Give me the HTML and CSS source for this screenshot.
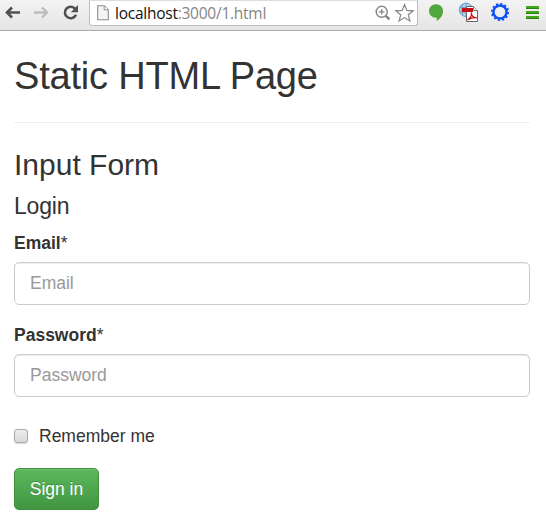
FILE: index.html
```html
<!DOCTYPE html>
<html lang="en">
<head>
<meta charset="utf-8">
<title>Static HTML Page</title>
<link rel="stylesheet" href="styles.css">
</head>
<body>
<header class="toolbar">
  <svg class="nav" width="82" height="30" viewBox="0 0 82 30" fill="none">
    <path d="M20 12.5H7M12 7.5l-5 5 5 5" stroke="#505050" stroke-width="2.6"/>
    <path d="M34 12.5h13M42 7.5l5 5-5 5" stroke="#bdbdbd" stroke-width="2.3"/>
    <path d="M75.200 8.800A5.800 5.800 0 1 0 76 14.800" stroke="#505050" stroke-width="2.500"/>
    <path d="M78 5v7.200h-7.200z" fill="#505050"/>
  </svg>
  <div class="address">
    <svg class="page-icon" width="12" height="16" viewBox="0 0 12 16">
      <path d="M.7.7h6.600l4 4v10h-10.600z" fill="#f5f5f5" stroke="#8d8d8d" stroke-width="1.100"/>
      <path d="M7.200.8v4h4" fill="#fff" stroke="#8d8d8d"/>
    </svg>
    <span class="url">localhost<span class="path">:3000/1.html</span></span>
    <svg class="actions" width="42" height="22" viewBox="0 0 42 22" fill="none" stroke="#858585">
      <circle cx="7.700" cy="8.800" r="5.500" stroke-width="1.400"/>
      <path d="M4.900 8.800h5.600M7.700 6v5.600" stroke-width="1.300"/>
      <path d="M11.800 12.800l3.600 3.500" stroke-width="2.500"/>
      <path d="M30.500 1.600l2.400 5.800 6.300.4-4.900 4 1.600 6.200-5.400-3.400-5.400 3.400 1.600-6.200-4.900-4 6.300-.4z" stroke-width="1.200"/>
    </svg>
  </div>
  <svg class="extensions" width="128" height="30" viewBox="418 0 128 30" fill="none">
    <path d="M436 4.200c4.200 0 7.100 3 7.100 6.900 0 4.300-3.200 8.400-6.400 10v-3.300c-4.700.3-7.700-2.800-7.700-6.700 0-3.900 3-6.900 7-6.900z" fill="#50a83d"/>
    <circle cx="466" cy="9.800" r="6.700" fill="#b9d6ef" stroke="#6497c7"/>
    <path d="M460 7.500h12M460 12h12M466 3v13M463 4q-3 6 0 11" stroke="#6a9acb" stroke-width=".9"/>
    <path d="M466.500 6.500h7l4 4v11h-11z" fill="#fff" stroke="#666"/>
    <path d="M462 8h11v4h-11z" fill="#c51116"/>
    <path d="M473.500 6.500v4h4" fill="#eee" stroke="#666" stroke-width=".8"/>
    <path d="M467.500 20c3-2 4.600-4.500 3.800-7.500.3 3.500 2 5.300 5.500 5.300-3-.4-5.800.2-9.300 2.200z" stroke="#c51116" stroke-width="1.300"/>
    <circle cx="500" cy="12" r="6.600" stroke="#0d50fa" stroke-width="2.500"/>
    <circle cx="500" cy="12" r="8.300" stroke="#0d50fa" stroke-width="1.600" stroke-dasharray="2.173 2.173"/>
    <g fill="#43a51b">
      <rect x="526" y="6" width="13" height="3" rx=".5"/>
      <rect x="526" y="11" width="13" height="3" rx=".5"/>
      <rect x="526" y="16" width="13" height="3" rx=".5"/>
    </g>
    <path d="M526 8.500h13M526 13.500h13M526 18.500h13" stroke="#28820d"/>
  </svg>
</header>
<main>
  <h1>Static HTML Page</h1>
  <h2>Input Form</h2>
  <form>
    <h3>Login</h3>
    <label class="label" for="email">Email<span>*</span></label>
    <input class="field" id="email" type="email" placeholder="Email">
    <label class="label" for="password">Password<span>*</span></label>
    <input class="field" id="password" type="password" placeholder="Password">
    <label class="remember"><input type="checkbox"><span>Remember me</span></label>
    <button type="button">Sign in</button>
  </form>
</main>
</body>
</html>
```
FILE: styles.css
```css
* { box-sizing: border-box; }
body {
  margin: 0;
  background: #fff;
  color: #333;
  font: 17.5px/25px "Liberation Sans", Arial, sans-serif;
  overflow: hidden;
}
.toolbar {
  display: flex;
  height: 31px;
  background: linear-gradient(#f3f3f3, #e5e5e5);
  border-bottom: 1px solid #aaa;
}
.nav { flex: none; }
.address {
  display: flex;
  width: 329px;
  height: 26px;
  margin-left: 7px;
  padding-left: 7px;
  background: #fff;
  border: 1px solid #bdbdbd;
  border-top-color: #ddd;
  border-radius: 0 0 3px 3px;
}
.page-icon { margin-top: 4px; }
.url {
  margin-left: 6px;
  color: #111;
  font: 15.5px/24px "Open Sans", sans-serif;
  letter-spacing: -.25px;
  white-space: nowrap;
}
.path { color: #858585; }
.actions { margin: 2px 1px 0 auto; flex: none; }
.extensions { flex: none; }
main { padding: 23px 16px 0 14px; }
h1, h2, h3 { margin: 0; font-weight: 400; }
h1 {
  height: 69px;
  border-bottom: 1px solid #eee;
  font-size: 38px;
  line-height: 44px;
  letter-spacing: -.2px;
}
h2 { margin-top: 25px; font-size: 30px; line-height: 34px; }
h3 { margin-top: 11px; font-size: 23px; line-height: 26px; letter-spacing: -.2px; }
.label { display: block; margin-top: 12px; font-weight: 700; }
.label span { font-weight: 400; }
.field {
  display: block;
  width: 100%;
  height: 43px;
  margin: 6px 0 18px;
  padding: 0 15px;
  border: 1px solid #ccc;
  border-radius: 5px;
  box-shadow: inset 0 1px 1px rgba(0, 0, 0, .075);
  font: inherit;
}
.field::placeholder { color: #999; opacity: 1; }
.remember { display: flex; align-items: flex-start; margin-top: 27px; }
.remember input {
  appearance: none;
  width: 14px;
  height: 14px;
  margin: 5px 11px 0 0;
  border: 1px solid #aaa;
  border-radius: 3px;
  background: linear-gradient(#eee, #d9d9d9);
  box-shadow: 0 1px 1px #ddd;
}
button {
  display: block;
  width: 85px;
  height: 42px;
  margin-top: 19px;
  padding: 0;
  border: 1px solid #3e8f3e;
  border-radius: 5px;
  background: linear-gradient(#5cb85c, #419641);
  box-shadow: inset 0 1px 0 rgba(255, 255, 255, .15), 0 1px 1px rgba(0, 0, 0, .075);
  color: #fff;
  font: inherit;
  text-shadow: 0 -1px 0 rgba(0, 0, 0, .2);
}
```
